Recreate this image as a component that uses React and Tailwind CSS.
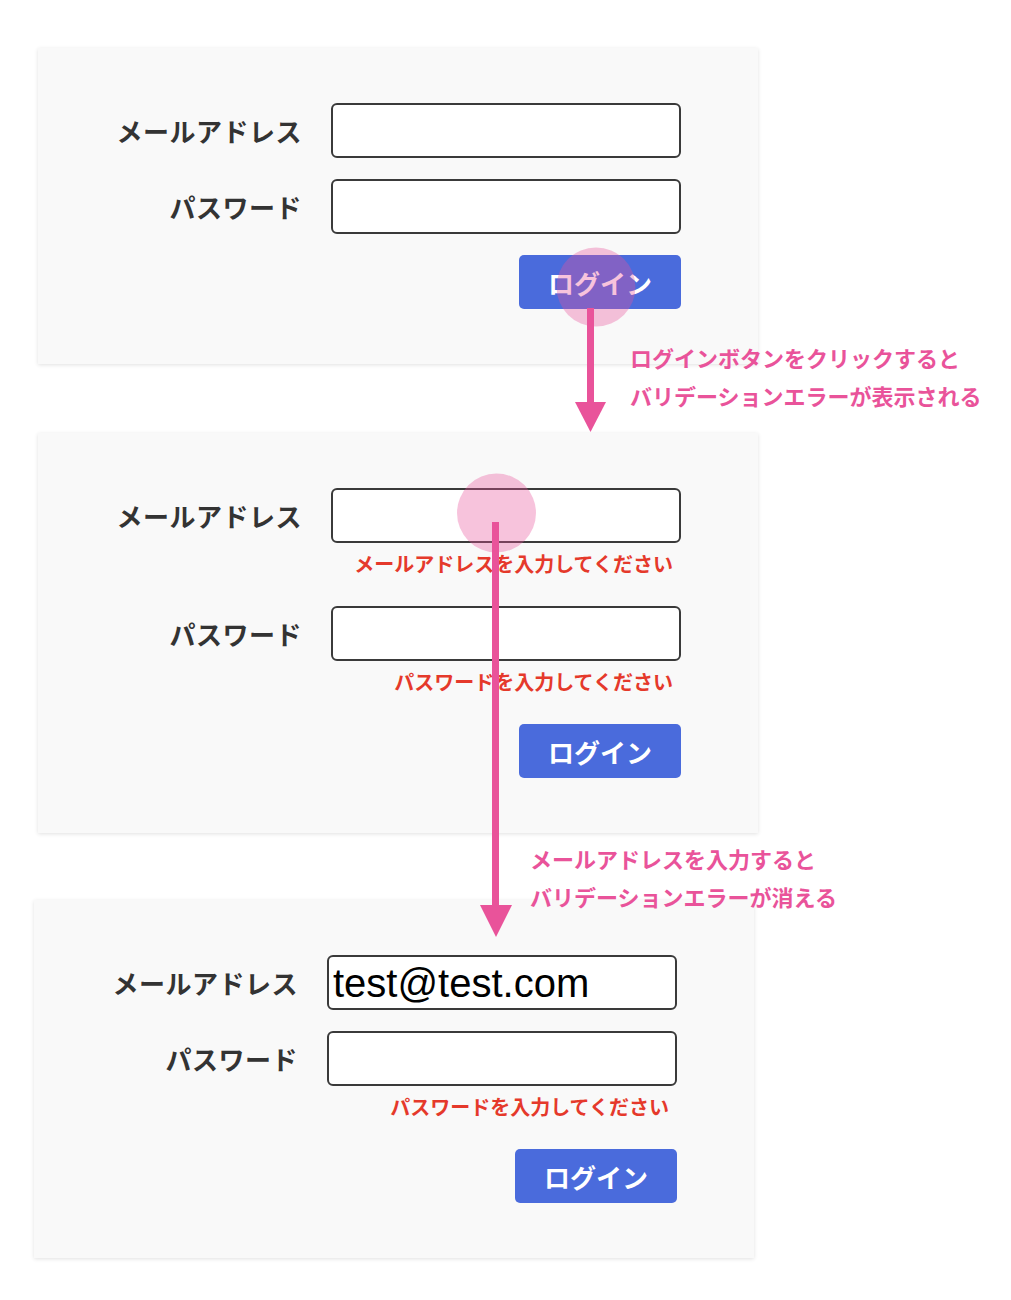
import React from 'react';

const jp = { fontFamily: '"Noto Sans CJK JP", "Noto Sans", sans-serif' };

const Field = ({ label, value, error }) => (
    <div>
        <div className="grid grid-cols-[264px_350px] gap-x-[29px] items-center">
            <label className="text-right text-[26px] leading-none font-bold tracking-[0.5px] text-[#333333]">
                {label}
            </label>
            <input
                type="text"
                readOnly
                value={value}
                className="h-[55px] w-[350px] rounded-[6px] border-2 border-[#3a3a3a] bg-white px-[4px] text-[40px] text-black outline-none"
                style={{ fontFamily: '"Liberation Sans", Arial, sans-serif' }}
            />
        </div>
        {error && (
            <div className="grid grid-cols-[264px_350px] gap-x-[29px]">
                <div />
                <p className="flex h-[42px] items-center justify-end pr-[8px] text-[20px] font-semibold text-[#e5392b]">
                    {error}
                </p>
            </div>
        )}
    </div>
);

const LoginPanel = ({ email = '', emailError, passwordError, className = '' }) => (
    <div className={`w-[720px] bg-[#f9f9f9] pt-[55px] pb-[55px] shadow-[0_1px_4px_rgba(0,0,0,0.12)] ${className}`}>
        <div className="flex flex-col gap-[21px]">
            <Field label="メールアドレス" value={email} error={emailError} />
            <Field label="パスワード" value="" error={passwordError} />
            <div className="grid grid-cols-[264px_350px] gap-x-[29px]">
                <div />
                <button
                    type="button"
                    className="h-[54px] w-[162px] justify-self-end rounded-[5px] bg-[#4a6bdc] text-[26px] font-bold text-white"
                >
                    ログイン
                </button>
            </div>
        </div>
    </div>
);

const App = () => {
    return (
        <div className="relative min-h-[1300px] w-[1011px] bg-white pt-[48px]" style={jp}>
            <LoginPanel className="ml-[38px]" />
            <LoginPanel
                className="ml-[38px] mt-[69px]"
                emailError="メールアドレスを入力してください"
                passwordError="パスワードを入力してください"
            />
            <LoginPanel
                className="ml-[34px] mt-[67px]"
                email="test@test.com"
                passwordError="パスワードを入力してください"
            />

            {/* 注釈: 矢印とクリック位置 */}
            <svg
                className="pointer-events-none absolute left-0 top-0"
                width="1011"
                height="1300"
                viewBox="0 0 1011 1300"
            >
                <circle cx="596" cy="287" r="39.5" fill="#e9539a" fillOpacity="0.35" />
                <rect x="587" y="308" width="7" height="97" fill="#e9539a" />
                <polygon points="575,402 606,402 590.5,432" fill="#e9539a" />

                <circle cx="496.5" cy="513" r="39.5" fill="#e9539a" fillOpacity="0.35" />
                <rect x="492" y="522" width="7" height="386" fill="#e9539a" />
                <polygon points="480,905 512,905 496,937" fill="#e9539a" />
            </svg>

            <div className="absolute left-[630px] top-[338px] text-[22px] font-bold leading-[38px] text-[#e9539a]">
                <p>ログインボタンをクリックすると</p>
                <p>バリデーションエラーが表示される</p>
            </div>
            <div className="absolute left-[530px] top-[839px] text-[22px] font-bold leading-[38px] text-[#e9539a]">
                <p>メールアドレスを入力すると</p>
                <p>バリデーションエラーが消える</p>
            </div>
        </div>
    );
};

export default App;
